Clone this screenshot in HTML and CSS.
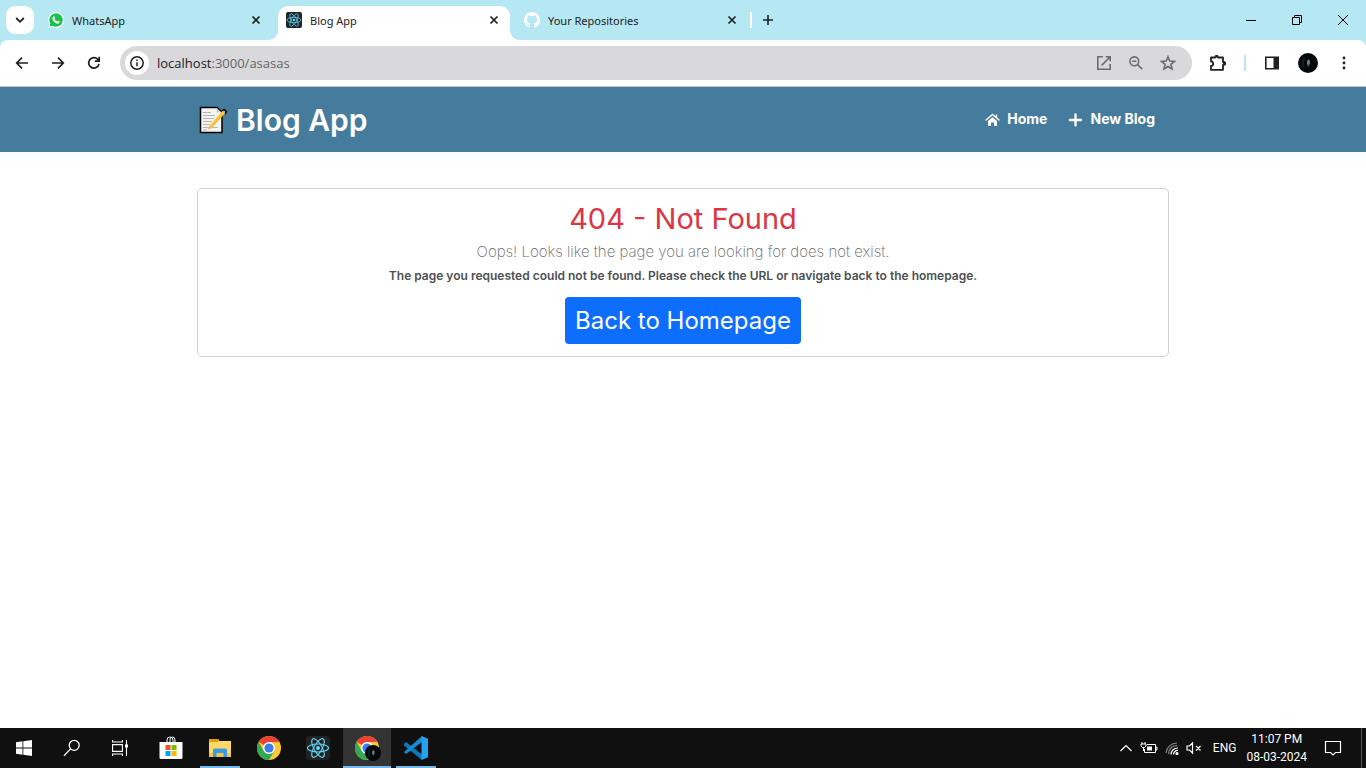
FILE: index.html
```html
<!DOCTYPE html>
<html lang="en">
<head>
<meta charset="utf-8">
<meta name="viewport" content="width=device-width, initial-scale=1">
<title>Blog App</title>
<link rel="stylesheet" href="styles.css">
</head>
<body>
<svg class="defs" aria-hidden="true">
  <symbol id="close" viewBox="0 0 10 10"><path d="M1.5 1.5 8.5 8.5M8.5 1.5 1.5 8.5" stroke="currentColor" stroke-width="1.7"/></symbol>
  <symbol id="atom" viewBox="0 0 24 24"><g fill="none" stroke="#61dafb" stroke-width="1.1"><ellipse cx="12" cy="12" rx="10.5" ry="4"/><ellipse cx="12" cy="12" rx="10.5" ry="4" transform="rotate(60 12 12)"/><ellipse cx="12" cy="12" rx="10.5" ry="4" transform="rotate(120 12 12)"/></g><circle cx="12" cy="12" r="2" fill="#61dafb"/></symbol>
  <symbol id="chrome" viewBox="0 0 24 24"><circle cx="12" cy="12" r="12" fill="#fcc934"/><path d="M12 12 1.6 6A12 12 0 0 1 22.4 6H12Z" fill="#ea4335"/><path d="M1.6 6A12 12 0 0 0 12 24L17.2 15 6.8 15Z" fill="#34a853"/><circle cx="12" cy="12" r="6" fill="#fff"/><circle cx="12" cy="12" r="4.6" fill="#3b7ded"/></symbol>
  <symbol id="avatar" viewBox="0 0 20 20"><circle cx="10" cy="10" r="10" fill="#05080a"/><path d="M7 5Q3 9 6 15" fill="none" stroke="#0a2226" stroke-width="2"/><path d="M10 6Q13 7 12 11L10 14 9 11Z" fill="#526467"/><path d="M10 7.5V11" stroke="#a4adad"/></symbol>
</svg>

<header class="browser">
  <div class="tabstrip">
    <button class="tab-search" aria-label="Search tabs"><svg width="10" height="10" viewBox="0 0 10 10"><path d="m1.2 3 3.8 3.8L8.8 3" fill="none" stroke="currentColor" stroke-width="1.8"/></svg></button>
    <div class="tabs">
      <div class="tab">
        <svg width="16" height="16" viewBox="0 0 16 16"><path d="M.3 15.7 1.2 12A8 8 0 1 1 4.2 15Z" fill="#fff"/><path d="M1.5 14.5 2.3 11.5A6.7 6.7 0 1 1 4.5 13.7Z" fill="#16c34b"/><path d="M5.6 4.3Q6.2 3.9 6.5 4.6L7 5.9Q6.9 6.6 6.4 7 7.2 8.8 9.1 9.6 9.5 9 10 8.8L11.7 9.6Q11.9 11.8 9.5 11.7 5.4 10.8 4.4 6.8 4.2 5.1 5.6 4.3Z" fill="#fff"/></svg>
        <span class="tab-title">WhatsApp</span><button class="tab-close" aria-label="Close WhatsApp"><svg width="10" height="10"><use href="#close"/></svg></button>
      </div>
      <div class="tab active">
        <svg class="favicon-atom" width="16" height="16"><use href="#atom"/></svg>
        <span class="tab-title">Blog App</span><button class="tab-close" aria-label="Close Blog App"><svg width="10" height="10"><use href="#close"/></svg></button>
      </div>
      <div class="tab">
        <svg width="16" height="16" viewBox="0 0 16 16"><path fill="#fff" d="M8 0C3.58 0 0 3.58 0 8c0 3.54 2.29 6.53 5.47 7.59.4.07.55-.17.55-.38 0-.19-.01-.82-.01-1.49-2.01.37-2.53-.49-2.69-.94-.09-.23-.48-.94-.82-1.13-.28-.15-.68-.52-.01-.53.63-.01 1.08.58 1.23.82.72 1.21 1.87.87 2.33.66.07-.52.28-.87.51-1.07-1.78-.2-3.64-.89-3.64-3.95 0-.87.31-1.59.82-2.15-.08-.2-.36-1.02.08-2.12 0 0 .67-.21 2.2.82.64-.18 1.32-.27 2-.27s1.36.09 2 .27c1.53-1.04 2.2-.82 2.2-.82.44 1.1.16 1.92.08 2.12.51.56.82 1.27.82 2.15 0 3.07-1.87 3.75-3.65 3.95.29.25.54.73.54 1.48 0 1.07-.01 1.93-.01 2.2 0 .21.15.46.55.38A8 8 0 0 0 16 8c0-4.42-3.58-8-8-8Z"/></svg>
        <span class="tab-title">Your Repositories</span><button class="tab-close" aria-label="Close Your Repositories"><svg width="10" height="10"><use href="#close"/></svg></button>
      </div>
    </div>
    <span class="tab-divider"></span>
    <button class="new-tab" aria-label="New tab"><svg width="10" height="10" viewBox="0 0 10 10"><path d="M5 0V10M0 5H10" stroke="currentColor" stroke-width="1.6"/></svg></button>
    <div class="window-controls">
      <button aria-label="Minimize"><svg width="10" height="10"><path d="M0 5.5H10" stroke="#000"/></svg></button>
      <button aria-label="Restore"><svg width="10" height="10"><path d="M.5 2.5H7.5V9.5H.5ZM2.5 2.5V.5H9.5V7.5H7.5" fill="none" stroke="#000"/></svg></button>
      <button aria-label="Close"><svg width="10" height="10"><path d="M0 0 10 10M10 0 0 10" stroke="#000"/></svg></button>
    </div>
  </div>
  <div class="toolbar">
    <div class="nav-buttons">
      <button aria-label="Back"><svg width="16" height="16" viewBox="0 0 16 16"><path d="M14 8H3M8 2.7 2.7 8 8 13.3" /></svg></button>
      <button aria-label="Forward"><svg width="16" height="16" viewBox="0 0 16 16"><path d="M2 8H13M8 2.7 13.3 8 8 13.3" /></svg></button>
      <button aria-label="Reload"><svg width="16" height="16" viewBox="0 0 16 16"><path d="M13 9A5.2 5.2 0 1 1 11.8 4.4L13 5.7M13.2 1.8V6.1H8.8" /></svg></button>
    </div>
    <div class="omnibox">
      <button class="site-info" aria-label="Site information"><svg width="16" height="16" viewBox="0 0 16 16"><circle cx="8" cy="8" r="6.2" fill="none" stroke="currentColor" stroke-width="1.5"/><path d="M8 7.2V11.3M8 4.6V6" stroke="currentColor" stroke-width="1.5"/></svg></button>
      <span class="url"><span class="host">localhost</span>:3000/asasas</span>
      <button aria-label="Open in app"><svg width="16" height="16" viewBox="0 0 16 16"><path d="M7 1.8H1.8V14.2H14.2V9M9.7 1.8H14.2V6.3M14 2 5.6 10.4"/></svg></button>
      <button aria-label="Zoom"><svg width="16" height="16" viewBox="0 0 16 16"><circle cx="6.3" cy="6.3" r="4.4"/><path d="M4.2 6.3H8.4M9.6 9.6 14.3 14.3"/></svg></button>
      <button aria-label="Bookmark this page"><svg width="16" height="16" viewBox="0 0 16 16"><path d="M8 1.7 9.8 6.1 14.5 6.4 10.9 9.4 12.1 14 8 11.5 3.9 14 5.1 9.4 1.5 6.4 6.2 6.1Z"/></svg></button>
    </div>
    <div class="extensions">
      <button aria-label="Extensions"><svg width="16" height="18" viewBox="1 0 16 18"><path d="M2 3.5H6.2Q6.4 2 7.6 2T9 3.5H14V8Q16.3 8 16.3 9.4T14 10.8V15.8H2V12Q4.2 11.8 4.2 9.7T2 7.4Z" fill="none" stroke="currentColor" stroke-width="1.8" stroke-linejoin="round"/><path d="M6 3.5V2Q7.6 0 9.2 2V3.5M14 7.8Q17.5 8 17 10 16.5 11.2 14 11Z" fill="currentColor"/></svg></button>
      <span class="toolbar-divider"></span>
      <button aria-label="Side panel"><svg width="16" height="16" viewBox="0 0 16 16"><path d="M1.8 2.2H14.2V13.8H1.8Z" fill="none" stroke="currentColor" stroke-width="1.6"/><path d="M9.5 2H14.5V14H9.5Z" fill="currentColor"/></svg></button>
      <button aria-label="Profile"><svg width="20" height="20"><use href="#avatar"/></svg></button>
      <button aria-label="Menu"><svg width="16" height="16" viewBox="0 0 16 16" fill="currentColor"><circle cx="8" cy="3" r="1.4"/><circle cx="8" cy="8" r="1.4"/><circle cx="8" cy="13" r="1.4"/></svg></button>
    </div>
  </div>
</header>

<div class="page">
  <nav class="navbar">
    <div class="container navbar-row">
      <a class="brand" href="#">
        <svg width="30" height="30" viewBox="0 0 30 30"><path d="M2.500 2.500H19L24 7V27.500H2.500Z" fill="#f4f4f4" stroke="#000" stroke-width="1.5"/><path d="M18.500 3V7.500H23.500" fill="#ccc"/><path d="M5 7.500H13M5 10.500H17M5 13.500H16M5 16.500H14M5 19.500H12M5 22.500H20M5 25H9" stroke="#b5b5b5"/><path d="m24 6 2-1.6 2.4 2-1.4 3" fill="#dca199" stroke="#000" stroke-width="1.4"/><path d="M10 24.8 11.4 20.5 24.4 6.1 27 8.4 13.8 22.8Z" fill="#ffc83d"/><path d="m10 24.8 1.3-3.7 2.2 2Z" fill="#e8bd8b"/><path d="m14 21.5 11-12.2" stroke="#e19d25" stroke-width=".7"/></svg>
        <span>Blog App</span>
      </a>
      <div class="nav-links">
        <a href="#"><svg width="15" height="15" viewBox="0 0 15 15"><path d="M1 8 7.5 2.4 14 8M11.5 3V5" fill="none" stroke="currentColor" stroke-width="1.4" stroke-linecap="round"/><path d="M3 9 7.500 5.300 12 9V14H9V10.500H6V14H3Z" fill="currentColor"/></svg><span>Home</span></a>
        <a href="#"><svg width="15" height="15" viewBox="0 0 15 15"><path d="M7.5 2.4V13.6M1.9 8H13.1" stroke="currentColor" stroke-width="2.3" stroke-linecap="round"/></svg><span>New Blog</span></a>
      </div>
    </div>
  </nav>
  <main class="container">
    <section class="card">
      <h1>404 - Not Found</h1>
      <p class="lead">Oops! Looks like the page you are looking for does not exist.</p>
      <p class="detail">The page you requested could not be found. Please check the URL or navigate back to the homepage.</p>
      <a class="home-button" href="#">Back to Homepage</a>
    </section>
  </main>
</div>

<footer class="taskbar">
  <div class="apps">
    <button aria-label="Start"><svg width="16" height="16" viewBox="0 0 16 16" fill="#fff"><path d="M0 2.2 6.5 1.3V7.5H0ZM7.3 1.2 16 0V7.5H7.3ZM0 8.4H6.5V14.7L0 13.8ZM7.3 8.4H16V16L7.3 14.8Z"/></svg></button>
    <button aria-label="Search"><svg width="18" height="18" viewBox="0 0 18 18" fill="none" stroke="#fff" stroke-width="1.3"><circle cx="11.2" cy="6.3" r="5"/><path d="M7.6 9.9 1 16.7"/></svg></button>
    <button aria-label="Task view"><svg width="16" height="16" viewBox="0 0 16 16" fill="none" stroke="#fff" stroke-width="1.1"><path d="M.6 4.6H10.4V11.4H.6ZM.6 0V2H10.4V0M.6 16V14H10.4V16M14.5 0V16"/><path d="M13 4.5H16V7.5H13Z" fill="#fff" stroke="none"/></svg></button>
    <div class="pinned">
      <button aria-label="Microsoft Store"><svg width="24" height="24" viewBox="0 0 24 24"><path d="M8 7V4Q8 1 11 1T14 4V7M11 7V4Q11 1 13.5 1T16 4V7" fill="none" stroke="#fff"/><path d="M.5 6H23.5V21.5Q23.5 23 22 23H2Q.5 23 .5 21.5Z" fill="#fff"/><path d="M6.5 9H11.5V14H6.5Z" fill="#f25022"/><path d="M12.5 9H17.5V14H12.5Z" fill="#7fba00"/><path d="M6.5 15H11.5V20H6.5Z" fill="#00a4ef"/><path d="M12.5 15H17.5V20H12.5Z" fill="#ffb900"/></svg></button>
      <button class="open" aria-label="File Explorer"><svg width="24" height="24" viewBox="0 0 24 24"><path d="M1 3H10L11.5 5H23V21H1Z" fill="#ffd867"/><path d="M1 3H10L11 4 10 6H1Z" fill="#e4a000"/><path d="M1 17H23V21H1Z" fill="#f4c34b"/><path d="M5 21V14Q5 12.5 6.5 12.5H17.5Q19 12.5 19 14V21H15.5V17H8.5V21Z" fill="#3d9ae2"/></svg></button>
      <button aria-label="Chrome"><svg width="24" height="24"><use href="#chrome"/></svg></button>
      <button aria-label="React"><svg class="atom-app" width="24" height="24"><use href="#atom"/></svg></button>
      <button class="open current" aria-label="Blog App in Chrome"><svg width="26" height="26" viewBox="0 0 26 26"><use href="#chrome" y="1" width="24" height="24"/><use href="#avatar" x="10" y="10" width="16" height="16"/></svg></button>
      <button class="open" aria-label="Visual Studio Code"><svg width="24" height="24" viewBox="0 0 24 24"><path d="M0 8 2 6 18 18.5V24L0 9.6Z" fill="#0c78bd"/><path d="M0 16 18 0V6L2 18Z" fill="#168bd2"/><path d="M17.5 0 24 2.8V21.2L17.5 24Z" fill="#24a3f1"/></svg></button>
    </div>
  </div>
  <div class="tray">
    <button aria-label="Show hidden icons"><svg width="14" height="12" viewBox="0 0 14 12"><path d="m1.5 9 5.500-5.500L12.500 9"/></svg></button>
    <svg width="18" height="14" viewBox="0 0 18 14"><path d="M7 3.500H15.500V11.500H4.500V8M15.500 6H17V9H15.500M2 1V3M5 1V3M1 3H6V5L4.500 6.500H2.500L1 5ZM3.500 6.500V10" stroke-width="1"/><path d="M7 5.500H12V9.500H7Z" fill="#fff" stroke="none"/></svg>
    <svg width="14" height="14" viewBox="0 0 14 14"><g stroke="#888"><path d="M1 12A11 11 0 0 1 12 2"/><path d="M3.500 13A8.500 8.500 0 0 1 12.500 4.500"/></g><path d="M6 13.500A6.500 6.500 0 0 1 13 7M8.500 13.500A4 4 0 0 1 13 9.500"/><circle cx="12" cy="12.500" r="1" fill="#fff"/></svg>
    <svg width="16" height="14" viewBox="0 0 16 14"><path d="M1 5H3.500L6.500 2V12L3.500 9H1ZM10 5 14.500 9.500M14.500 5 10 9.500"/></svg>
    <span class="language">ENG</span>
    <div class="clock"><time>11:07 PM</time><time>08-03-2024</time></div>
    <button class="notifications" aria-label="Notifications"><svg width="18" height="18" viewBox="0 0 18 18"><path d="M1.500 2.500H16.500V13.500H11.500L9 16 6.500 13.500H1.500Z"/></svg></button>
  </div>
</footer>
</body>
</html>
```

FILE: styles.css
```css
* { box-sizing: border-box; }
body { margin: 0; min-height: 100vh; display: flex; flex-direction: column; background: #fff; color: #1f2023; font-family: "Open Sans", "Noto Sans", sans-serif; font-size: 12px; }
button { display: flex; align-items: center; justify-content: center; padding: 0; border: 0; background: none; color: inherit; font: inherit; }
a { color: inherit; text-decoration: none; }
svg { display: block; flex: none; }
h1, p { margin: 0; }
.defs { display: none; }

.browser { background: #b5e8f2; border-bottom: 1px solid #c4c7c9; }
.tabstrip { display: flex; align-items: center; height: 40px; padding-left: 6px; }
.tab-search { width: 28px; height: 28px; border-radius: 9px; background: #fff; }
.tabs { display: flex; align-self: stretch; gap: 6px; padding: 6px 0 0 6px; }
.tab { display: flex; align-items: center; width: 232px; height: 34px; gap: 8px; padding: 0 8px 6px; }
.tab-title { flex: 1; white-space: nowrap; font-family: "Noto Sans", sans-serif; font-size: 11px; }
.tab-close { width: 16px; height: 16px; }
.active { position: relative; border-radius: 10px 10px 0 0; background: #fff; }
.active::before, .active::after { content: ""; position: absolute; bottom: 0; width: 10px; height: 10px; }
.active::before { right: 100%; background: radial-gradient(circle at 0 0, transparent 10px, #fff 10px); }
.active::after { left: 100%; background: radial-gradient(circle at 100% 0, transparent 10px, #fff 10px); }
.favicon-atom { border-radius: 2px; background: #20232a; }
.tab-divider { width: 2px; height: 16px; margin-left: 2px; background: #fff; }
.new-tab { width: 32px; height: 28px; }
.window-controls { display: flex; align-self: stretch; margin-left: auto; }
.window-controls button { width: 46px; }

.toolbar { display: flex; align-items: center; height: 46px; border-radius: 8px 8px 0 0; background: #fff; }
.nav-buttons { display: flex; gap: 8px; padding: 0 12px 0 8px; }
.nav-buttons button { width: 28px; height: 28px; }
.nav-buttons svg { fill: none; stroke: currentColor; stroke-width: 1.7; }
.omnibox { flex: 1; display: flex; align-items: center; gap: 16px; height: 34px; padding: 0 16px 0 5px; border-radius: 17px; background: #d9d9db; }
.omnibox svg { fill: none; stroke: #6b6c6f; stroke-width: 1.6; }
.site-info { width: 24px; height: 24px; border-radius: 50%; background: #fff; }
.omnibox .site-info svg { stroke: none; }
.url { flex: 1; margin-left: -8px; color: #646568; font-size: 13px; }
.host { color: #1f2023; }
.extensions { display: flex; align-items: center; gap: 18px; padding: 0 14px 0 18px; }
.toolbar-divider { width: 2px; height: 16px; background: #b5e8f2; }

.page { flex: 1; font-family: Inter, Lato, sans-serif; }
.container { width: 100%; max-width: 972px; margin: 0 auto; }
.navbar { background: #457b9d; color: #fff; }
.navbar-row { display: flex; align-items: center; justify-content: space-between; min-height: 65px; }
.brand { display: flex; align-items: center; gap: 8px; padding-left: 1px; font-size: 30px; font-weight: 600; }
.nav-links { display: flex; gap: 21px; padding-right: 14px; font-size: 14px; font-weight: 700; }
.nav-links a { display: flex; align-items: center; gap: 7px; }
.nav-links span { padding-bottom: 3px; }
.card { display: flex; flex-direction: column; align-items: center; margin-top: 36px; padding: 12px; border: 1px solid #d0d2d4; border-radius: 5px; text-align: center; }
.card h1 { color: #dc3545; font-size: 29px; font-weight: 400; line-height: 36px; }
.lead { margin-top: 3px; color: #62666a; font-size: 15px; font-weight: 200; line-height: 24px; }
.detail { color: #4c5054; font-size: 12px; font-weight: 600; line-height: 24px; }
.home-button { margin-top: 9px; padding: 5px 10px; border-radius: 4px; background: #0d6efd; color: #fff; font-size: 24px; font-weight: 400; line-height: 37px; }

.taskbar { display: flex; justify-content: space-between; height: 40px; background: #101010; color: #fff; }
.apps, .pinned { display: flex; }
.apps button { width: 48px; border-bottom: 2px solid transparent; border-top: 2px solid transparent; }
.pinned { gap: 9px; padding-left: 7px; }
.pinned button { width: 40px; }
.pinned .open { border-bottom-color: #76b9ed; }
.pinned .current { width: 48px; margin: 0 -4px; padding-left: 2px; background: #333; border-top-color: #333; }
.atom-app { border-radius: 3px; background: #222; }
.tray { display: flex; align-items: center; gap: 7px; margin-right: 4px; padding-right: 19px; border-right: 1px solid #555; font-family: Roboto, sans-serif; }
.tray svg { fill: none; stroke: #fff; stroke-width: 1.2; }
.language { margin-left: 4px; }
.clock { display: grid; margin-left: 3px; line-height: 18px; text-align: center; }
.notifications { margin-left: 10px; }
```
